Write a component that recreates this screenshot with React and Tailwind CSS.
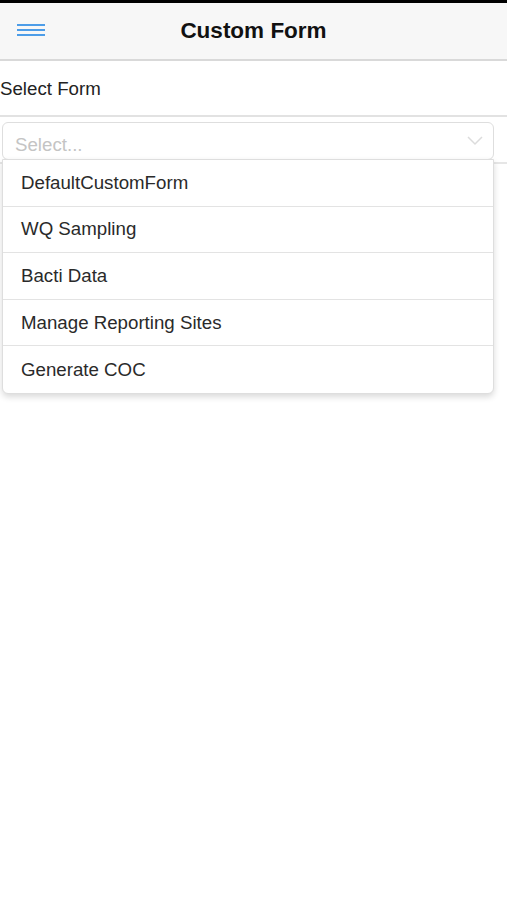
import React from "react";

const forms = ["DefaultCustomForm", "WQ Sampling", "Bacti Data", "Manage Reporting Sites", "Generate COC"];

export default function App() {
  return (
    <div className="w-[507px] h-[900px] bg-white text-[#222] font-['Liberation_Sans',Arial,sans-serif] border-t-[3px] border-black">
      {/* header */}
      <div className="relative h-[58px] bg-[#f7f7f7] border-b-2 border-[#d9d9d9] flex items-center justify-center">
        <button className="absolute left-[17px] top-[21px] flex flex-col gap-[3px]">
          <span className="block w-[28px] h-[2px] bg-[#4d9de8]" />
          <span className="block w-[28px] h-[2px] bg-[#4d9de8]" />
          <span className="block w-[28px] h-[2px] bg-[#4d9de8]" />
        </button>
        <h1 className="text-[22.5px] font-bold text-[#111]">Custom Form</h1>
      </div>

      <div className="h-[56px] flex items-center pt-[3px] border-b-2 border-[#e2e2e2] text-[18.7px]">
        Select Form
      </div>

      <div className="relative pt-[5px] pb-[2px] pl-[2px] pr-[13px] border-b-2 border-[#e6e6e6]">
        <div className="h-[38px] rounded-[6px] border border-[#dedede] flex items-center justify-between pl-[12px] pr-[10px] text-[18.7px] text-[#c4c4c4]">
          <span className="pt-[8px]">Select...</span>
          <svg width="16" height="10" viewBox="0 0 16 10" fill="none" stroke="#dcdcdc" strokeWidth="1.5">
            <path d="M1 1l7 7 7-7" />
          </svg>
        </div>

        {/* dropdown menu */}
        <div className="absolute left-[2px] top-[42px] w-[492px] bg-white border border-[#dedede] rounded-b-[6px] shadow-[0_3px_6px_rgba(0,0,0,0.15)] z-10">
          {forms.map((f, i) => (
            <div
              key={f}
              className={`h-[46.6px] flex items-center pl-[18px] text-[18.7px] text-[#2a2a2a] ${i < forms.length - 1 ? "border-b border-[#e3e3e3]" : ""}`}
            >
              {f}
            </div>
          ))}
        </div>
      </div>
    </div>
  );
}
